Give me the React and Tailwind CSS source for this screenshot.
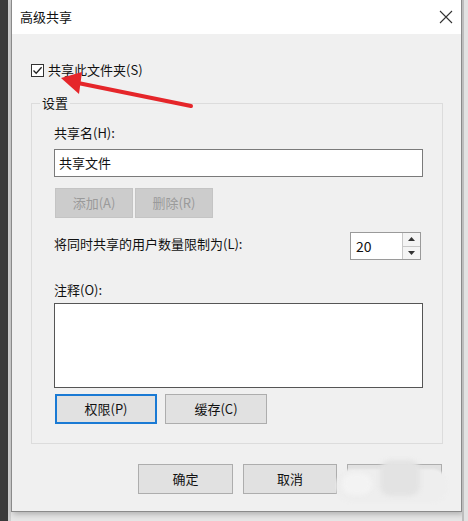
import React from 'react'

const font = { fontFamily: '"Noto Sans CJK SC", "Noto Sans", sans-serif' }

function WinButton({ children, className = '' }) {
  return (
    <div className={`flex items-center justify-center h-[30px] border bg-[#e1e1e1] text-[13px] text-[#111] ${className}`}>
      {children}
    </div>
  )
}

export default function App() {
  return (
    <div className="relative w-[468px] h-[521px] overflow-hidden bg-[#e6e6e6] flex" style={font}>
      {/* left desktop strip */}
      <div className="w-[8px] h-full bg-[#3a3a3a]" />
      <div className="w-[3px] h-full bg-[#cfcfcf]" />

      {/* dialog window */}
      <div className="w-[451px] h-[512px] flex flex-col border-x border-b border-[#8a8a8a] shadow-[2px_2px_6px_rgba(0,0,0,0.25)]">
        <div className="h-[34px] bg-white flex items-center justify-between pl-[8px] pr-[7px]">
          <span className="text-[13px] text-[#111] leading-[16px]">高级共享</span>
          <svg width="16" height="16" viewBox="0 0 16 16">
            <path d="M2 2 L14 14 M14 2 L2 14" stroke="#333" strokeWidth="1.1" />
          </svg>
        </div>

        <div className="flex-1 bg-[#f0f0f0] flex flex-col pl-[19px] pr-[18px]">
          {/* share checkbox */}
          <div className="mt-[28px] h-[16px] flex items-center gap-[4px]">
            <div className="w-[13px] h-[13px] border border-[#333] bg-white flex items-center justify-center">
              <svg width="11" height="11" viewBox="0 0 11 11">
                <path d="M1.5 5.5 L4.2 8.3 L9.6 2.2" fill="none" stroke="#222" strokeWidth="1.3" />
              </svg>
            </div>
            <span className="text-[13px] leading-[16px] text-[#111]">共享此文件夹(S)</span>
          </div>

          {/* settings group */}
          <div className="mt-[25px] border border-[#dcdcdc] flex flex-col pl-[22px] pr-[19px] pb-[19px]">
            <div className="-mt-[9px] -ml-[14px] px-[2px] w-fit bg-[#f0f0f0] text-[13px] leading-[16px] text-[#111]">设置</div>

            <div className="mt-[14px] text-[13px] leading-[16px] text-[#111]">共享名(H):</div>
            <div className="mt-[8px] h-[28px] border border-[#7a7a7a] bg-white flex items-center pl-[4px] text-[13px] text-[#111]">共享文件</div>

            <div className="mt-[11px] flex gap-[2px] pl-[1px]">
              <div className="w-[78px] h-[30px] flex items-center justify-center bg-[#cccccc] border border-[#c4c4c4] text-[13px] text-[#9a9a9a]">添加(A)</div>
              <div className="w-[78px] h-[30px] flex items-center justify-center bg-[#cccccc] border border-[#c4c4c4] text-[13px] text-[#9a9a9a]">删除(R)</div>
            </div>

            <div className="mt-[14px] flex items-center justify-between pr-[2px]">
              <span className="text-[13px] leading-[16px] text-[#111] -mt-[5px]">将同时共享的用户数量限制为(L):</span>
              <div className="w-[71px] h-[28px] border border-[#9a9a9a] bg-white flex">
                <div className="flex-1 flex items-center pl-[5px] text-[14px] text-[#111]">20</div>
                <div className="w-[18px] flex flex-col border-l border-[#c8c8c8] bg-[#f4f4f4]">
                  <div className="flex-1 flex items-center justify-center border-b border-[#c8c8c8]">
                    <svg width="7" height="4" viewBox="0 0 7 4"><path d="M0 4 L3.5 0 L7 4Z" fill="#333" /></svg>
                  </div>
                  <div className="flex-1 flex items-center justify-center">
                    <svg width="7" height="4" viewBox="0 0 7 4"><path d="M0 0 L3.5 4 L7 0Z" fill="#333" /></svg>
                  </div>
                </div>
              </div>
            </div>

            <div className="mt-[22px] text-[13px] leading-[16px] text-[#111]">注释(O):</div>
            <div className="mt-[5px] h-[85px] border border-[#555] bg-white" />

            <div className="mt-[6px] flex gap-[8px] pl-[1px]">
              <WinButton className="w-[102px] border-[#1a7ad4] border-[2px]">权限(P)</WinButton>
              <WinButton className="w-[102px] border-[#adadad]">缓存(C)</WinButton>
            </div>
          </div>

          {/* dialog buttons */}
          <div className="mt-[20px] flex justify-end gap-[10px] pr-[1px]">
            <WinButton className="w-[95px] border-[#adadad]">确定</WinButton>
            <WinButton className="w-[94px] border-[#adadad]">取消</WinButton>
            <div className="relative w-[95px] h-[30px] border border-[#adadad] bg-[#e1e1e1]">
              {/* watermark smudge */}
              <div className="absolute -left-[12px] top-[4px] w-[112px] h-[34px] rounded-[16px] bg-[#eeeeee] blur-[1px]" />
              <div className="absolute left-[32px] -top-[5px] w-[40px] h-[36px] rounded-[10px] bg-[#e3e3e3] blur-[2px]" />
              <div className="absolute left-[-6px] top-[8px] w-[30px] h-[22px] rounded-full bg-[#f3f3f3] blur-[2px]" />
            </div>
          </div>
        </div>
      </div>

      {/* right strip */}
      <div className="w-[2px] h-full bg-[#bdbdbd]" />
      <div className="w-[4px] h-full bg-[#e2e2e2]" />

      {/* red annotation arrow */}
      <svg className="absolute left-0 top-0 pointer-events-none" width="468" height="521" viewBox="0 0 468 521">
        <line x1="191" y1="106" x2="78" y2="83" stroke="#e5262a" strokeWidth="4" strokeLinecap="round" />
        <path d="M61 78 L82 72 L79 94 Z" fill="#e5262a" />
      </svg>
    </div>
  )
}
